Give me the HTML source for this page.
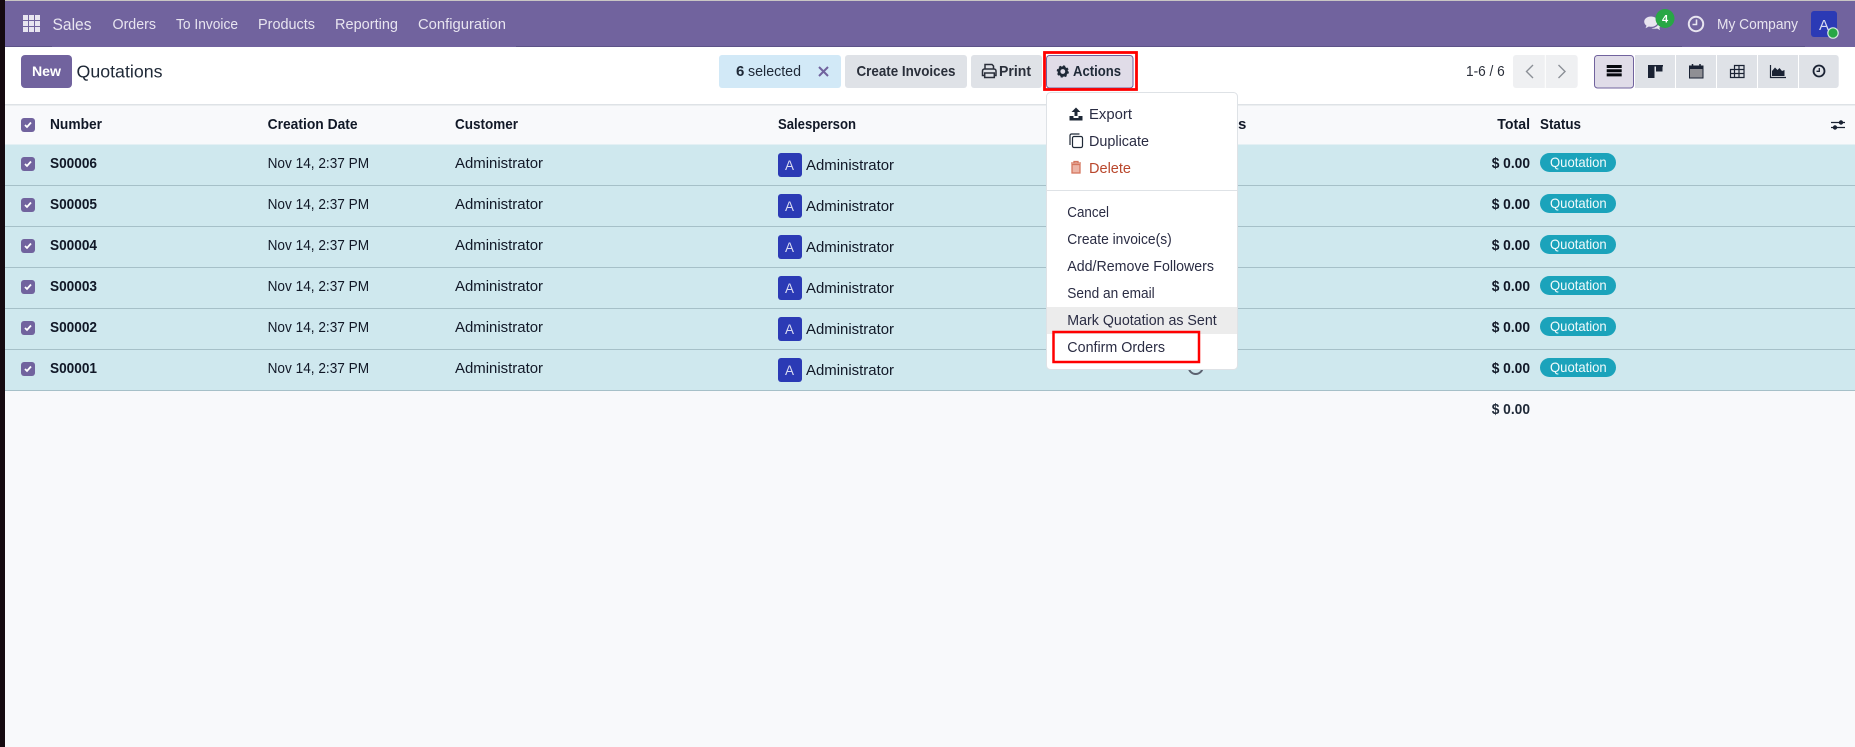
<!DOCTYPE html>
<html lang="en">
<head>
<meta charset="utf-8">
<title>Quotations</title>
<style>
html,body{margin:0;padding:0;width:1855px;height:747px;overflow:hidden;background:#f8f9fb}
svg{display:block}
text{font-family:"Liberation Sans",sans-serif;font-size:15px;fill:#111827}
.nav{fill:#e8e5f0}
.b{font-weight:700}
.hd{font-weight:700;fill:#111827}
.m{fill:#2a2c43}
</style>
</head>
<body>
<svg width="1855" height="747" viewBox="0 0 1855 747" xmlns="http://www.w3.org/2000/svg">
<rect width="1855" height="747" fill="#f8f9fb"/>
<!-- control panel -->
<rect x="5" y="47" width="1850" height="58" fill="#fff"/>
<rect x="5" y="104" width="1850" height="1.5" fill="#dee2e6"/>
<!-- navbar -->
<rect x="0" y="0" width="1855" height="1.2" fill="#c9c6c4"/>
<rect x="5" y="1" width="1850" height="46" fill="#71639e"/>
<path d="M5 46h47v1h-47zM516 46h1166v1h-1166zM1710 46h95v1h-95z" fill="#5d5388"/>
<g fill="#e8e5f0">
<rect x="23" y="15" width="5" height="5"/><rect x="29" y="15" width="5" height="5"/><rect x="35" y="15" width="5" height="5"/>
<rect x="23" y="21" width="5" height="5"/><rect x="29" y="21" width="5" height="5"/><rect x="35" y="21" width="5" height="5"/>
<rect x="23" y="27" width="5" height="5"/><rect x="29" y="27" width="5" height="5"/><rect x="35" y="27" width="5" height="5"/>
</g>
<text class="nav" x="52.5" y="30" style="font-size:17px" textLength="39" lengthAdjust="spacingAndGlyphs">Sales</text>
<text class="nav" x="112.5" y="29" textLength="43.5" lengthAdjust="spacingAndGlyphs">Orders</text>
<text class="nav" x="176" y="29" textLength="62" lengthAdjust="spacingAndGlyphs">To Invoice</text>
<text class="nav" x="258" y="29" textLength="57" lengthAdjust="spacingAndGlyphs">Products</text>
<text class="nav" x="335" y="29" textLength="63" lengthAdjust="spacingAndGlyphs">Reporting</text>
<text class="nav" x="418" y="29" textLength="88" lengthAdjust="spacingAndGlyphs">Configuration</text>
<!-- systray -->
<path d="M1651 16.500c-3.800 0-6.800 2.300-6.800 5.200 0 1.600 1 3 2.300 4l-1 2.600 3.400-1.800c.7.2 1.400.3 2.100.3 3.800 0 6.800-2.300 6.800-5.100s-3-5.200-6.800-5.200z" fill="#e8e5f0"/>
<path d="M1659 21c1.200 1 1.900 2.200 1.900 3.500 0 1.300-.6 2.400-1.600 3.300l.8 2.300-3-1.600c-.8.2-1.600.3-2.400.3-1.200 0-2.300-.2-3.200-.7 4.400 0 7.800-3 7.500-7.100z" fill="#e8e5f0"/>
<circle cx="1665" cy="18.500" r="9.500" fill="#28a745"/>
<text x="1662" y="22.500" class="b" style="font-size:11px;fill:#fff">4</text>
<circle cx="1696" cy="24" r="7.200" fill="none" stroke="#e8e5f0" stroke-width="2"/>
<path d="M1696.500 19.500v5h-4" fill="none" stroke="#e8e5f0" stroke-width="1.600"/>
<text class="nav" x="1717" y="29" textLength="81" lengthAdjust="spacingAndGlyphs">My Company</text>
<rect x="1811" y="11" width="26" height="26" rx="3" fill="#2b3ab5"/>
<text x="1819" y="30" style="font-size:15px;fill:#d9dbf2">A</text>
<circle cx="1833" cy="33" r="5.200" fill="#28a745" stroke="#d6ece0" stroke-width="1.200"/>
<!-- new / breadcrumb -->
<rect x="21" y="55" width="51" height="33" rx="4" fill="#71639e"/>
<text x="32" y="76" class="b" style="fill:#fff;font-size:14px" textLength="29" lengthAdjust="spacingAndGlyphs">New</text>
<text x="76.500" y="77.500" style="font-size:17.500px;fill:#1f2937" textLength="86" lengthAdjust="spacingAndGlyphs">Quotations</text>
<!-- selection -->
<rect x="719" y="55" width="122" height="33" rx="3" fill="#d2e9f7"/>
<text x="736" y="76" class="b" style="fill:#1f2937">6</text>
<text x="748" y="76" style="fill:#1f2937" textLength="53" lengthAdjust="spacingAndGlyphs">selected</text>
<path d="M819 67l9 9M828 67l-9 9" stroke="#71639e" stroke-width="2" fill="none"/>
<rect x="845" y="55" width="122" height="33" rx="3" fill="#dfe2e7"/>
<text x="856.500" y="76" class="b" style="fill:#2a2f3a" textLength="99" lengthAdjust="spacingAndGlyphs">Create Invoices</text>
<rect x="971" y="55" width="71" height="33" rx="3" fill="#dfe2e7"/>
<path d="M985 69v-4.500h7l1.500 1.500v3" fill="none" stroke="#2a2f3a" stroke-width="1.500"/>
<path d="M984 75.500h-1.500v-4.500a2 2 0 0 1 2-2h9.500a2 2 0 0 1 2 2v4.500h-1.500" fill="none" stroke="#2a2f3a" stroke-width="1.500"/>
<rect x="984.700" y="73" width="9.600" height="4.500" fill="none" stroke="#2a2f3a" stroke-width="1.500"/>
<text x="999" y="76" class="b" style="fill:#2a2f3a" textLength="32" lengthAdjust="spacingAndGlyphs">Print</text>
<rect x="1046.500" y="55.500" width="86.500" height="32.500" rx="3" fill="#e0dce8" stroke="#71639e"/>
<circle cx="1062.800" cy="71.500" r="3.800" fill="none" stroke="#1f2937" stroke-width="2.800"/>
<circle cx="1062.800" cy="71.500" r="5.200" fill="none" stroke="#1f2937" stroke-width="1.800" stroke-dasharray="2.100 2"/>
<text x="1073" y="76" class="b" style="fill:#1f2937" textLength="48" lengthAdjust="spacingAndGlyphs">Actions</text>
<!-- pager -->
<text x="1466" y="76" style="fill:#2a2f3a;font-size:14.500px" textLength="38.700" lengthAdjust="spacingAndGlyphs">1-6 / 6</text>
<rect x="1513" y="55" width="64.700" height="33" rx="3" fill="#eff0f2"/>
<rect x="1544.800" y="55" width="1" height="33" fill="#fff"/>
<path d="M1533 65l-6.500 6.500 6.500 6.500M1558.500 65l6.500 6.500-6.500 6.500" fill="none" stroke="#8b8f96" stroke-width="1.400"/>
<!-- view switcher -->
<rect x="1594.500" y="55.500" width="39" height="32.500" rx="3" fill="#e0dce8" stroke="#71639e"/>
<path d="M1635 55h40v33h-40zM1676 55h40v33h-40zM1717 55h40v33h-40zM1758 55h40v33h-40z" fill="#dfe2e7"/>
<path d="M1799 55h36.700a3 3 0 0 1 3 3v27a3 3 0 0 1-3 3h-36.700z" fill="#dfe2e7"/>
<path d="M1606.700 65h15v3h-15zM1606.700 69.200h15v3h-15zM1606.700 73.400h15v3h-15z" fill="#05070d"/>
<path d="M1648 65h15v1.500h-15zM1648 66h6.500v12h-6.500zM1656 66h6.500v5.500h-6.500z" fill="#1a2233"/>
<path d="M1689.500 67.500h13.500v10.500h-13.500z" fill="#8f8f94" stroke="#1a2233"/>
<path d="M1689 65.500h14.500v3.500h-14.500z" fill="#1a2233"/>
<path d="M1692.500 64v3M1700 64v3" stroke="#1a2233" stroke-width="1.500"/>
<path d="M1734.500 65.500h9.500v12h-13.500v-8h4zM1730.500 69.500h13.500M1730.500 73.500h13.500M1734.500 65.500v12M1739 65.500v12" fill="none" stroke="#1a2233" stroke-width="1.200"/>
<path d="M1770.500 65v12.500h15.500" fill="none" stroke="#1a2233" stroke-width="1.200"/>
<path d="M1772 76v-5l3-3.500 2.500 2.500 2-2 2.500 3 2.500-1v6z" fill="#1a2233"/>
<circle cx="1819" cy="71" r="5.500" fill="none" stroke="#1a2233" stroke-width="1.800"/>
<path d="M1819.300 68v3.300h-2.800" fill="none" stroke="#1a2233" stroke-width="1.300"/>
<!-- header row -->
<rect x="21" y="118" width="14" height="14" rx="3" fill="#71639e"/>
<path d="M25 125l2 2 4-4.500" fill="none" stroke="#fff" stroke-width="1.800"/>
<text class="hd" x="50" y="129" textLength="52" lengthAdjust="spacingAndGlyphs">Number</text>
<text class="hd" x="267.600" y="129" textLength="90" lengthAdjust="spacingAndGlyphs">Creation Date</text>
<text class="hd" x="455" y="129" textLength="63" lengthAdjust="spacingAndGlyphs">Customer</text>
<text class="hd" x="778" y="129" textLength="78" lengthAdjust="spacingAndGlyphs">Salesperson</text>
<text class="hd" x="1238" y="129">s</text>
<text class="hd" x="1497.300" y="129" textLength="32.700" lengthAdjust="spacingAndGlyphs">Total</text>
<text class="hd" x="1540" y="129" textLength="41" lengthAdjust="spacingAndGlyphs">Status</text>
<path d="M1831 122.500h14M1831 127.500h14" stroke="#1a2233" stroke-width="1.200"/>
<circle cx="1841" cy="122.500" r="2.200" fill="#1a2233"/><circle cx="1835" cy="127.500" r="2.200" fill="#1a2233"/>
<!-- rows -->
<rect x="5" y="144.500" width="1850" height="246.500" fill="#cfe8ee"/>
<g fill="#a6c0c8">
<rect x="5" y="185" width="1850" height="1"/><rect x="5" y="226" width="1850" height="1"/><rect x="5" y="267" width="1850" height="1"/><rect x="5" y="308" width="1850" height="1"/><rect x="5" y="349" width="1850" height="1"/><rect x="5" y="390" width="1850" height="1"/>
</g>

<g transform="translate(0,0)">
<rect x="21" y="157" width="14" height="14" rx="3" fill="#71639e"/><path d="M25 164l2 2 4-4.500" fill="none" stroke="#fff" stroke-width="1.800"/>
<text class="b" x="50" y="168" textLength="47" lengthAdjust="spacingAndGlyphs">S00006</text>
<text x="267.600" y="168" textLength="101.500" lengthAdjust="spacingAndGlyphs">Nov 14, 2:37 PM</text>
<text x="455" y="168" textLength="88" lengthAdjust="spacingAndGlyphs">Administrator</text>
<rect x="778" y="153" width="24" height="24" rx="3" fill="#2b3ab5"/><text x="785" y="170" style="font-size:13.500px;fill:#d9dbf2">A</text>
<text x="806" y="170" textLength="88" lengthAdjust="spacingAndGlyphs">Administrator</text>
<text class="b" x="1491.700" y="168" textLength="38.300" lengthAdjust="spacingAndGlyphs">$ 0.00</text>
<rect x="1540" y="153" width="76" height="19" rx="9.500" fill="#1ba3bb"/><text x="1550" y="167" style="font-size:14px;fill:#f2fbfc" textLength="56.700" lengthAdjust="spacingAndGlyphs">Quotation</text>
</g>
<g transform="translate(0,41)">
<rect x="21" y="157" width="14" height="14" rx="3" fill="#71639e"/><path d="M25 164l2 2 4-4.500" fill="none" stroke="#fff" stroke-width="1.800"/>
<text class="b" x="50" y="168" textLength="47" lengthAdjust="spacingAndGlyphs">S00005</text>
<text x="267.600" y="168" textLength="101.500" lengthAdjust="spacingAndGlyphs">Nov 14, 2:37 PM</text>
<text x="455" y="168" textLength="88" lengthAdjust="spacingAndGlyphs">Administrator</text>
<rect x="778" y="153" width="24" height="24" rx="3" fill="#2b3ab5"/><text x="785" y="170" style="font-size:13.500px;fill:#d9dbf2">A</text>
<text x="806" y="170" textLength="88" lengthAdjust="spacingAndGlyphs">Administrator</text>
<text class="b" x="1491.700" y="168" textLength="38.300" lengthAdjust="spacingAndGlyphs">$ 0.00</text>
<rect x="1540" y="153" width="76" height="19" rx="9.500" fill="#1ba3bb"/><text x="1550" y="167" style="font-size:14px;fill:#f2fbfc" textLength="56.700" lengthAdjust="spacingAndGlyphs">Quotation</text>
</g>
<g transform="translate(0,82)">
<rect x="21" y="157" width="14" height="14" rx="3" fill="#71639e"/><path d="M25 164l2 2 4-4.500" fill="none" stroke="#fff" stroke-width="1.800"/>
<text class="b" x="50" y="168" textLength="47" lengthAdjust="spacingAndGlyphs">S00004</text>
<text x="267.600" y="168" textLength="101.500" lengthAdjust="spacingAndGlyphs">Nov 14, 2:37 PM</text>
<text x="455" y="168" textLength="88" lengthAdjust="spacingAndGlyphs">Administrator</text>
<rect x="778" y="153" width="24" height="24" rx="3" fill="#2b3ab5"/><text x="785" y="170" style="font-size:13.500px;fill:#d9dbf2">A</text>
<text x="806" y="170" textLength="88" lengthAdjust="spacingAndGlyphs">Administrator</text>
<text class="b" x="1491.700" y="168" textLength="38.300" lengthAdjust="spacingAndGlyphs">$ 0.00</text>
<rect x="1540" y="153" width="76" height="19" rx="9.500" fill="#1ba3bb"/><text x="1550" y="167" style="font-size:14px;fill:#f2fbfc" textLength="56.700" lengthAdjust="spacingAndGlyphs">Quotation</text>
</g>
<g transform="translate(0,123)">
<rect x="21" y="157" width="14" height="14" rx="3" fill="#71639e"/><path d="M25 164l2 2 4-4.500" fill="none" stroke="#fff" stroke-width="1.800"/>
<text class="b" x="50" y="168" textLength="47" lengthAdjust="spacingAndGlyphs">S00003</text>
<text x="267.600" y="168" textLength="101.500" lengthAdjust="spacingAndGlyphs">Nov 14, 2:37 PM</text>
<text x="455" y="168" textLength="88" lengthAdjust="spacingAndGlyphs">Administrator</text>
<rect x="778" y="153" width="24" height="24" rx="3" fill="#2b3ab5"/><text x="785" y="170" style="font-size:13.500px;fill:#d9dbf2">A</text>
<text x="806" y="170" textLength="88" lengthAdjust="spacingAndGlyphs">Administrator</text>
<text class="b" x="1491.700" y="168" textLength="38.300" lengthAdjust="spacingAndGlyphs">$ 0.00</text>
<rect x="1540" y="153" width="76" height="19" rx="9.500" fill="#1ba3bb"/><text x="1550" y="167" style="font-size:14px;fill:#f2fbfc" textLength="56.700" lengthAdjust="spacingAndGlyphs">Quotation</text>
</g>
<g transform="translate(0,164)">
<rect x="21" y="157" width="14" height="14" rx="3" fill="#71639e"/><path d="M25 164l2 2 4-4.500" fill="none" stroke="#fff" stroke-width="1.800"/>
<text class="b" x="50" y="168" textLength="47" lengthAdjust="spacingAndGlyphs">S00002</text>
<text x="267.600" y="168" textLength="101.500" lengthAdjust="spacingAndGlyphs">Nov 14, 2:37 PM</text>
<text x="455" y="168" textLength="88" lengthAdjust="spacingAndGlyphs">Administrator</text>
<rect x="778" y="153" width="24" height="24" rx="3" fill="#2b3ab5"/><text x="785" y="170" style="font-size:13.500px;fill:#d9dbf2">A</text>
<text x="806" y="170" textLength="88" lengthAdjust="spacingAndGlyphs">Administrator</text>
<text class="b" x="1491.700" y="168" textLength="38.300" lengthAdjust="spacingAndGlyphs">$ 0.00</text>
<rect x="1540" y="153" width="76" height="19" rx="9.500" fill="#1ba3bb"/><text x="1550" y="167" style="font-size:14px;fill:#f2fbfc" textLength="56.700" lengthAdjust="spacingAndGlyphs">Quotation</text>
</g>
<g transform="translate(0,205)">
<rect x="21" y="157" width="14" height="14" rx="3" fill="#71639e"/><path d="M25 164l2 2 4-4.500" fill="none" stroke="#fff" stroke-width="1.800"/>
<text class="b" x="50" y="168" textLength="47" lengthAdjust="spacingAndGlyphs">S00001</text>
<text x="267.600" y="168" textLength="101.500" lengthAdjust="spacingAndGlyphs">Nov 14, 2:37 PM</text>
<text x="455" y="168" textLength="88" lengthAdjust="spacingAndGlyphs">Administrator</text>
<rect x="778" y="153" width="24" height="24" rx="3" fill="#2b3ab5"/><text x="785" y="170" style="font-size:13.500px;fill:#d9dbf2">A</text>
<text x="806" y="170" textLength="88" lengthAdjust="spacingAndGlyphs">Administrator</text>
<text class="b" x="1491.700" y="168" textLength="38.300" lengthAdjust="spacingAndGlyphs">$ 0.00</text>
<rect x="1540" y="153" width="76" height="19" rx="9.500" fill="#1ba3bb"/><text x="1550" y="167" style="font-size:14px;fill:#f2fbfc" textLength="56.700" lengthAdjust="spacingAndGlyphs">Quotation</text>
</g>
<!-- activity icon peeking from under dropdown -->
<circle cx="1195.700" cy="367" r="7" fill="none" stroke="#5b6270" stroke-width="2"/>
<!-- footer total -->
<text class="b" x="1491.700" y="414" style="fill:#1f2937" textLength="38.300" lengthAdjust="spacingAndGlyphs">$ 0.00</text>
<!-- dropdown -->
<rect x="1046.500" y="92.500" width="191" height="277" rx="4" fill="#fff" stroke="#dee2e6"/>
<path d="M1076 107.500l-4.500 4.500h3v4h3v-4h3z" fill="#1f2937"/>
<path d="M1069.500 116h4v2h5v-2h4v4.500h-13z" fill="#1f2937"/>
<text class="m" x="1089" y="119" textLength="43" lengthAdjust="spacingAndGlyphs">Export</text>
<path d="M1070 145v-9.500a1.500 1.500 0 0 1 1.500-1.500h8" fill="none" stroke="#1f2937" stroke-width="1.200"/>
<rect x="1072.500" y="136.500" width="10" height="11" rx="1.500" fill="none" stroke="#1f2937" stroke-width="1.200"/>
<text class="m" x="1089" y="146" textLength="60" lengthAdjust="spacingAndGlyphs">Duplicate</text>
<path d="M1071 163h10M1074 163v-1.500h4v1.500" fill="none" stroke="#d5775f" stroke-width="1.300"/>
<rect x="1072" y="164.500" width="8" height="8.500" fill="#ecb5a7" stroke="#d5775f" stroke-width="1.300"/>
<text x="1089" y="173" style="fill:#b9472c" textLength="42" lengthAdjust="spacingAndGlyphs">Delete</text>
<rect x="1047" y="190" width="190" height="1" fill="#dee2e6"/>
<text class="m" x="1067.300" y="217" textLength="41.700" lengthAdjust="spacingAndGlyphs">Cancel</text>
<text class="m" x="1067.300" y="244" textLength="104.400" lengthAdjust="spacingAndGlyphs">Create invoice(s)</text>
<text class="m" x="1067.300" y="271" textLength="146.700" lengthAdjust="spacingAndGlyphs">Add/Remove Followers</text>
<text class="m" x="1067.300" y="298" textLength="87.400" lengthAdjust="spacingAndGlyphs">Send an email</text>
<rect x="1047" y="307" width="190" height="27" fill="#ececec"/>
<text class="m" x="1067.300" y="325" textLength="149.400" lengthAdjust="spacingAndGlyphs">Mark Quotation as Sent</text>
<text class="m" x="1067.300" y="352" textLength="97.700" lengthAdjust="spacingAndGlyphs">Confirm Orders</text>
<!-- red highlights -->
<rect x="1044.500" y="52.500" width="92" height="37" fill="none" stroke="#f00" stroke-width="2.800"/>
<rect x="1053.500" y="332" width="145.500" height="30" fill="none" stroke="#f00" stroke-width="2.500"/>
<!-- left dark strip -->
<rect x="0" y="0" width="5" height="747" fill="#150a10"/>
</svg>
</body>
</html>
